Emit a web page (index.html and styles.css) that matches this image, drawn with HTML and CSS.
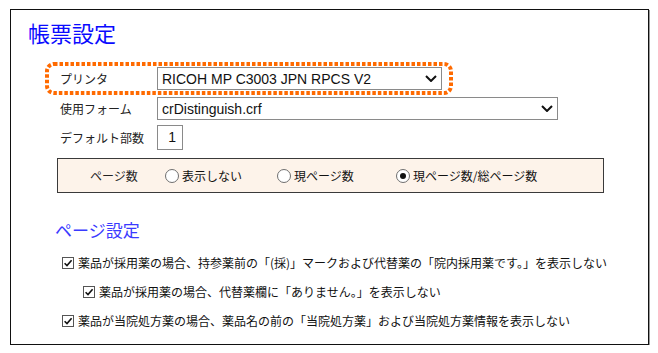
FILE: index.html
```html
<!DOCTYPE html>
<html lang="ja">
<head>
<meta charset="utf-8">
<title>帳票設定</title>
<link rel="stylesheet" href="styles.css">
</head>
<body>
<div class="frame">
  <h1 class="title">帳票設定</h1>
  <div class="form">
    <div class="row hl">
      <svg class="hl-border" aria-hidden="true"><rect class="hl-rect" rx="7" ry="7"/></svg>
      <span class="label">プリンタ</span>
      <div class="select sel-printer">
        <span class="sel-text">RICOH MP C3003 JPN RPCS V2</span>
        <svg class="chev" viewBox="0 0 12 7" aria-hidden="true"><polyline points="1,1 6,6 11,1"/></svg>
      </div>
    </div>
    <div class="row row-form">
      <span class="label">使用フォーム</span>
      <div class="select sel-form">
        <span class="sel-text">crDistinguish.crf</span>
        <svg class="chev" viewBox="0 0 12 7" aria-hidden="true"><polyline points="1,1 6,6 11,1"/></svg>
      </div>
    </div>
    <div class="row row-num">
      <span class="label">デフォルト部数</span>
      <div class="num">1</div>
    </div>
  </div>

  <div class="pagebox">
    <span class="pb-label">ページ数</span>
    <span class="radio opt1"><span class="rc"></span>表示しない</span>
    <span class="radio opt2"><span class="rc"></span>現ページ数</span>
    <span class="radio opt3"><span class="rc on"></span>現ページ数/総ページ数</span>
  </div>

  <h2 class="sub">ページ設定</h2>
  <ul class="checks">
    <li class="chk"><span class="cb"><svg viewBox="0 0 10 10" aria-hidden="true"><polyline points="1.6,5.2 4,7.6 8.6,2.2"/></svg></span>薬品が採用薬の場合、持参薬前の「(採)」マークおよび代替薬の「院内採用薬です。」を表示しない</li>
    <li class="chk indent"><span class="cb"><svg viewBox="0 0 10 10" aria-hidden="true"><polyline points="1.6,5.2 4,7.6 8.6,2.2"/></svg></span>薬品が採用薬の場合、代替薬欄に「ありません。」を表示しない</li>
    <li class="chk"><span class="cb"><svg viewBox="0 0 10 10" aria-hidden="true"><polyline points="1.6,5.2 4,7.6 8.6,2.2"/></svg></span>薬品が当院処方薬の場合、薬品名の前の「当院処方薬」および当院処方薬情報を表示しない</li>
  </ul>
</div>
</body>
</html>
```

FILE: styles.css
```css
* { box-sizing: border-box; }

html, body {
  margin: 0;
  padding: 0;
  background: #fff;
}

body {
  font-family: "Noto Sans CJK JP", "Noto Sans", sans-serif;
  font-size: 12px;
  color: #111;
}

.frame {
  margin: 9px 0 0 10px;
  width: 639px;
  height: 336px;
  border: 1px solid #111;
  box-shadow: 1px 1px 0 #9a9a9a;
  padding-top: 9px;
}

.title {
  margin: 0 0 17px 17px;
  font-size: 22px;
  line-height: 26px;
  font-weight: normal;
  color: #0a0aff;
}

.form {
  padding-left: 49px;
}

.row {
  display: flex;
  align-items: center;
}

.label {
  width: 97px;
  flex: none;
  font-size: 12px;
  line-height: 16px;
  color: #222;
}

.hl {
  position: relative;
  width: max-content;
  margin-left: -15px;
  padding: 5px 11px 5px 15px;
}

.hl-border {
  position: absolute;
  left: 0;
  top: 0;
  width: 100%;
  height: 100%;
  overflow: visible;
}

.hl-rect {
  x: 2px;
  y: 2px;
  width: calc(100% - 4px);
  height: calc(100% - 4px);
  fill: none;
  stroke: #ff6a00;
  stroke-width: 4;
  stroke-dasharray: 3.5 2;
}

.select {
  display: flex;
  align-items: center;
  justify-content: space-between;
  height: 23px;
  border: 1px solid #8a8a8a;
  background: #fff;
  padding: 0 4px 0 4px;
  font-family: "Liberation Sans", Arial, sans-serif;
  font-size: 14px;
  color: #111;
}

.sel-printer { width: 285px; }
.sel-form { width: 401px; }

.sel-text { white-space: nowrap; }

.chev {
  width: 12px;
  height: 7px;
  flex: none;
}

.chev polyline {
  fill: none;
  stroke: #111;
  stroke-width: 2;
}

.row-form { margin-top: 2px; }
.row-num { margin-top: 5px; }

.num {
  width: 26px;
  height: 25px;
  border: 1px solid #8a8a8a;
  font-family: "Liberation Sans", Arial, sans-serif;
  font-size: 14px;
  line-height: 23px;
  text-align: right;
  padding-right: 6px;
}

.pagebox {
  display: flex;
  align-items: center;
  margin: 8px 0 0 46px;
  width: 547px;
  height: 35px;
  background: #fdf3ea;
  border: 1px solid #3a3a3a;
  padding-left: 32px;
}

.pb-label {
  width: 75px;
  flex: none;
  color: #222;
}

.radio {
  display: flex;
  align-items: center;
  flex: none;
}

.opt1 { width: 112px; }
.opt2 { width: 119px; }

.rc {
  width: 14px;
  height: 14px;
  border: 1px solid #6f6f6f;
  border-radius: 50%;
  background: #fff;
  margin-right: 3px;
  display: flex;
  align-items: center;
  justify-content: center;
}

.rc.on::after {
  content: "";
  width: 6px;
  height: 6px;
  border-radius: 50%;
  background: #111;
}

.sub {
  margin: 27px 0 0 44px;
  font-size: 17px;
  line-height: 20px;
  font-weight: normal;
  color: #3a3aff;
}

.checks {
  list-style: none;
  margin: 8px 0 0 0;
  padding: 0 0 0 51px;
}

.chk {
  display: flex;
  align-items: center;
  height: 29px;
  white-space: nowrap;
}

.chk.indent { padding-left: 21px; }

.cb {
  width: 12px;
  height: 12px;
  border: 1px solid #555;
  background: #fff;
  margin-right: 4px;
  flex: none;
  display: flex;
}

.cb svg {
  width: 10px;
  height: 10px;
}

.cb polyline {
  fill: none;
  stroke: #111;
  stroke-width: 1.6;
}
```
